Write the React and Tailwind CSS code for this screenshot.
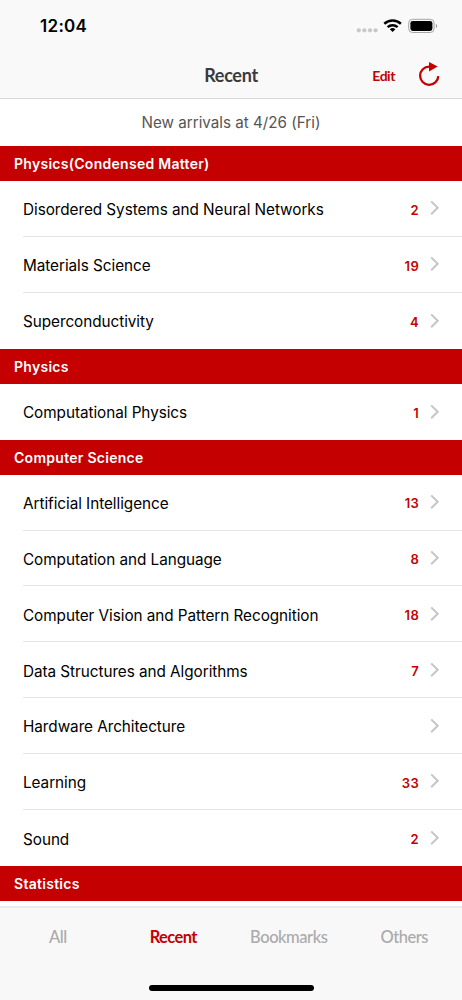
import React from "react";

const sections = [
  {
    title: "Physics(Condensed Matter)",
    rows: [
      ["Disordered Systems and Neural Networks", 2],
      ["Materials Science", 19],
      ["Superconductivity", 4],
    ],
  },
  { title: "Physics", rows: [["Computational Physics", 1]] },
  {
    title: "Computer Science",
    rows: [
      ["Artificial Intelligence", 13],
      ["Computation and Language", 8],
      ["Computer Vision and Pattern Recognition", 18],
      ["Data Structures and Algorithms", 7],
      ["Hardware Architecture", null],
      ["Learning", 33],
      ["Sound", 2],
    ],
  },
  { title: "Statistics", rows: [] },
];

const tabs = ["All", "Recent", "Bookmarks", "Others"];

function StatusBar() {
  return (
    <div className="flex h-[51px] items-center justify-between pl-[40px] pr-[24px]">
      <span className="pt-[1px] text-[17px] font-semibold leading-none tracking-[0.3px] text-black">12:04</span>
      <svg className="h-[20px] w-[82px]" viewBox="0 0 82 20">
        <g fill="#c8c8ca">
          <circle cx="2.8" cy="14.3" r="2.1" />
          <circle cx="8.4" cy="14.3" r="2.1" />
          <circle cx="14" cy="14.3" r="2.1" />
          <circle cx="19.6" cy="14.3" r="2.1" />
        </g>
        <g fill="none" stroke="#000" strokeWidth="2.5">
          <path d="M28.3 7.7a12.4 12.4 0 0 1 16.6 0" />
          <path d="M31.6 11.1a7.4 7.4 0 0 1 10 0" />
        </g>
        <path d="M33.8 13.2a4.2 4.2 0 0 1 5.6 0l-2.8 2.9z" fill="#000" />
        <rect x="52.7" y="3.3" width="25.4" height="13.2" rx="3.8" fill="none" stroke="#a5a5a5" />
        <rect x="54.4" y="4.9" width="22" height="10" rx="2.3" fill="#000" />
        <path d="M79.9 7.8v4.4c1.8-.7 1.8-3.7 0-4.4z" fill="#a0a0a0" />
      </svg>
    </div>
  );
}

function NavBar() {
  return (
    <div className="grid h-[47px] grid-cols-[1fr_auto_1fr] items-center px-[22px] font-['Lato','Liberation_Sans',sans-serif]">
      <span />
      <h1 className="text-[18px] font-bold leading-none tracking-[-0.3px] text-[#3a3a3c]">Recent</h1>
      <div className="flex items-center justify-end gap-[23px] text-[#c40000]">
        <button className="pt-[2px] text-[14px] font-bold leading-none tracking-[-0.45px]">Edit</button>
        <svg className="mb-[2px] h-[26px] w-[22px]" viewBox="0 0 22 26">
          <path d="M11.2 5.6a9.1 9.1 0 1 0 9.1 9.5" fill="none" stroke="currentColor" strokeWidth="2.3" />
          <path d="M11 1.1l8.7 4.5-8.7 4.8z" fill="currentColor" />
        </svg>
      </div>
    </div>
  );
}

function SectionHeader({ title }) {
  return (
    <h2 className="flex h-[35.2px] shrink-0 items-center bg-[#c40000] pl-[14px] text-[14px] font-semibold tracking-[0.28px] text-white">
      {title}
    </h2>
  );
}

function Row({ label, count, last }) {
  return (
    <li className="flex h-[55.85px] pl-[23px]">
      <div className={`flex flex-1 items-center pr-[22px] ${last ? "" : "border-b border-[#e4e4e6]"}`}>
        <span className="flex-1 pt-[4.6px] text-[15.3px] tracking-[-0.05px] text-black">{label}</span>
        <span className="pt-[4px] text-[13px] font-semibold tracking-[0.3px] text-[#c40000]">{count}</span>
        <svg className="ml-[11px] h-[16px] w-[10px]" viewBox="0 0 10 16">
          <path d="M1.2 1.4l6.5 6.4-6.5 6.4" fill="none" stroke="#c5c5ca" strokeWidth="2" />
        </svg>
      </div>
    </li>
  );
}

export default function App() {
  return (
    <div className="flex h-[1000px] w-[462px] flex-col overflow-hidden bg-white font-['Inter','Liberation_Sans',sans-serif]">
      <header className="h-[99px] shrink-0 border-b border-[#d8d8da] bg-[#f9f9f9]">
        <StatusBar />
        <NavBar />
      </header>
      <main className="h-[807px] shrink-0 overflow-hidden">
        <p className="flex h-[46.8px] items-center justify-center pt-[1px] text-[15.2px] text-[#555]">
          New arrivals at 4/26 (Fri)
        </p>
        {sections.map((s) => (
          <section key={s.title}>
            <SectionHeader title={s.title} />
            <ul>
              {s.rows.map(([label, count], i) => (
                <Row key={label} label={label} count={count} last={i === s.rows.length - 1} />
              ))}
            </ul>
          </section>
        ))}
      </main>
      <footer className="flex flex-1 flex-col items-center border-t-2 border-[#ebebeb] bg-[#f8f8f8]">
        <nav className="grid h-[58px] w-full grid-cols-4 items-center text-center font-['Lato','Liberation_Sans',sans-serif] text-[16.5px] leading-none tracking-[-0.45px]">
          {tabs.map((t) => (
            <span key={t} className={t === "Recent" ? "font-bold tracking-[-0.6px] text-[#c40000]" : "font-medium text-[#aaa]"}>
              {t}
            </span>
          ))}
        </nav>
        <div className="mt-[19px] h-[6px] w-[165px] rounded-full bg-black" />
      </footer>
    </div>
  );
}
